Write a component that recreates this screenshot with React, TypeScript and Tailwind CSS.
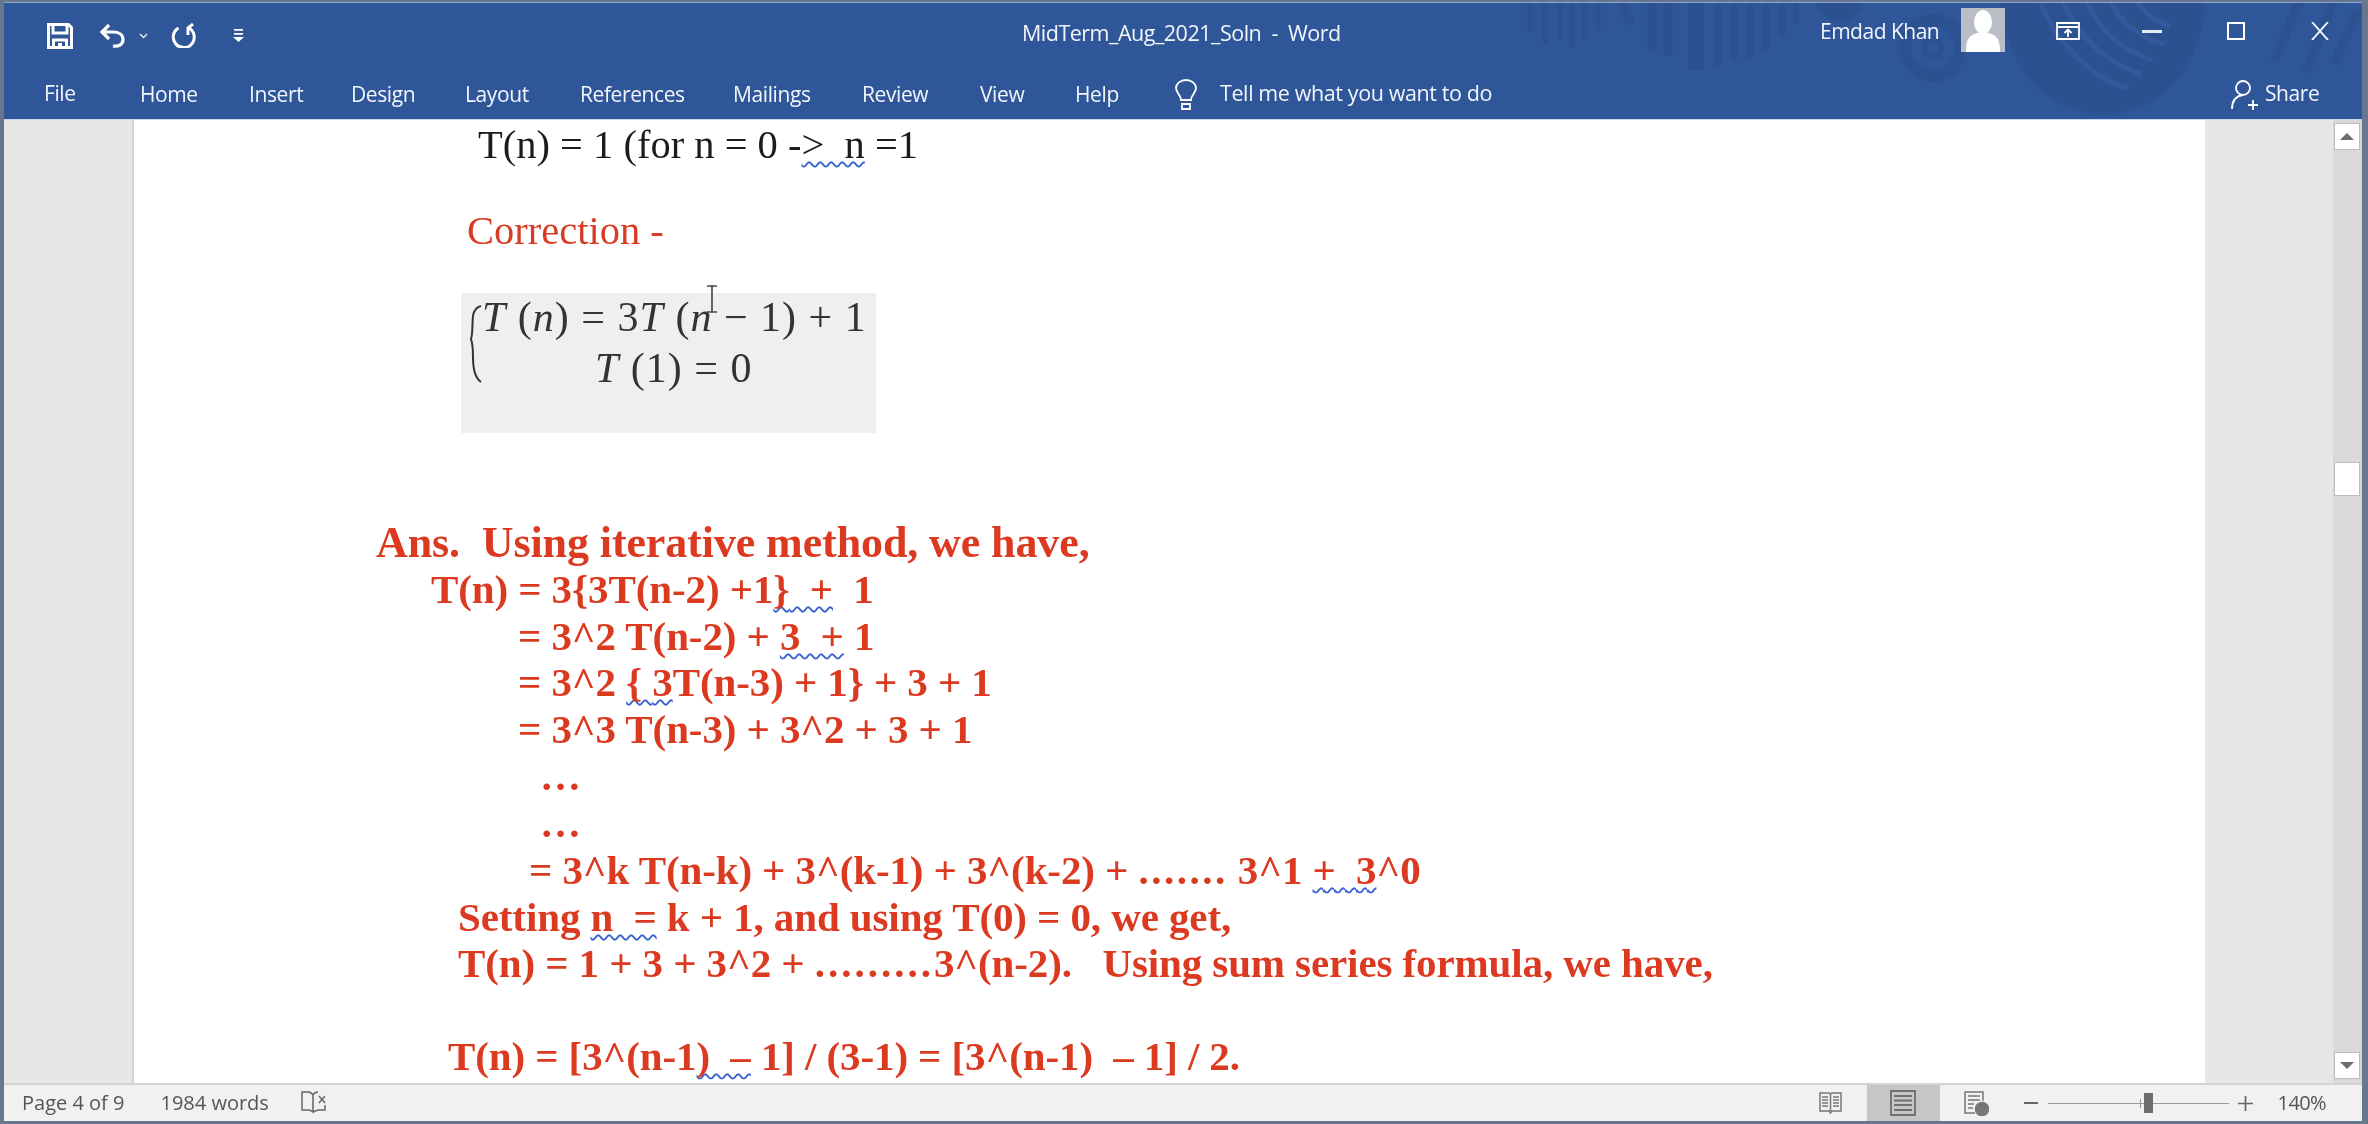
import React from "react";

const Sq = ({ children }: { children: React.ReactNode }) => (
  <span className="underline decoration-wavy decoration-[#3763cf] decoration-[1.5px] underline-offset-[3px] [text-decoration-skip-ink:none]">{children}</span>
);

function Line({ h, ml, cls, children }: { h: string; ml: string; cls: string; children: React.ReactNode }) {
  return <div className={`${h} ${ml} ${cls} flex items-center whitespace-pre leading-none`}>{children}</div>;
}

const bold = "font-bold text-[#dc3a20] text-[41px] tracking-[-0.1px]";

function Watermark() {
  return (
    <svg className="absolute left-0 top-0 pointer-events-none" width="2358" height="117" viewBox="4 3 2358 117" fill="none">
      <g stroke="#2c5190" strokeWidth="5">
        <path d="M1530 0v32M1545 0v44M1560 0v40M1572 0v48M1585 0v40M1598 0v30" />
        <path d="M1622 0l8 24" strokeWidth="9" />
        <path d="M1652 0v52M1668 0v56" strokeWidth="9" />
        <path d="M1696 0v70" strokeWidth="16" />
        <path d="M1718 0v66M1734 0v62M1750 0v58M1766 0v50M1782 0v38M1796 0v24" strokeWidth="6" />
      </g>
      <path d="M1814 0c4 14 16 22 26 22s20-8 24-22z" fill="#2c5190" />
      <circle cx="1933" cy="48" r="28" stroke="#2c5190" strokeWidth="12" />
      <circle cx="1933" cy="48" r="9" stroke="#2c5190" strokeWidth="5" />
      <path d="M2001 0c4 70 46 114 104 114c58 0 98-50 100-114z" fill="#2c5190" />
      <g stroke="#33599c" strokeWidth="5">
        <path d="M2040 0c14 40 50 78 88 88M2062 0c12 30 40 62 80 74M2086 0c10 24 30 48 66 60M2110 0c8 18 24 36 54 44M2136 0c6 10 16 20 34 26" />
      </g>
      <path d="M2300 0l-26 62M2334 0l-28 72M2358 10l-24 54" stroke="#2c5190" strokeWidth="9" />
    </svg>
  );
}

export default function App() {
  return (
    <div className="w-[2368px] h-[1124px] overflow-hidden bg-[#66778f] blur-[0.5px] font-['Open_Sans','Liberation_Sans',sans-serif]">
      <div className="mt-[2px] ml-[4px] w-[2358px] h-[1119px] flex flex-col bg-[#2f5699] border-t border-[#8ea6cc]">
        {/* Title bar */}
        <div className="relative h-[116px] shrink-0 text-white overflow-hidden">
          <Watermark />
          <div className="relative h-[68px] flex items-center">
            <div className="flex items-center -mt-[3px]">
              <svg className="ml-[43px]" width="26" height="26" viewBox="0 0 26 26" fill="none" stroke="white" strokeWidth="3">
                <path d="M1.5 1.5h20l3 3v20h-23z" />
                <path d="M6 2v8h14V2" />
                <path d="M6.500 25v-8h13v8" />
                <path d="M11 20h4v4h-4z" fill="white" stroke="none" />
              </svg>
              <svg className="ml-[26px]" width="27" height="25" viewBox="0 0 27 25" fill="none" stroke="white" strokeWidth="3.2">
                <path d="M10 2L3 9l7 7" />
                <path d="M3 9h11c6 0 10 3 10 7.500S20 24 14 23" />
              </svg>
              <svg className="ml-[13px]" width="9" height="6" viewBox="0 0 9 6" fill="none" stroke="#dfe7f3" strokeWidth="1.5">
                <path d="M1 1l3.500 3.500L8 1" />
              </svg>
              <svg className="ml-[23px]" width="25" height="25" viewBox="0 0 25 25" fill="none" stroke="white" strokeWidth="3">
                <path d="M7.500 5A10.500 10.500 0 1 0 17 4.500" />
                <path d="M22 1l-5 4v7" />
              </svg>
              <svg className="ml-[37px]" width="11" height="13" viewBox="0 0 11 13" fill="white">
                <path d="M1 0h9v1.800H1zM1 4h9v1.800H1zM0 8h11l-5.500 5z" />
              </svg>
            </div>
            <div className="absolute left-[1018px] top-[16px] text-[21.5px] tracking-[-0.5px] text-[#f2f5fa] leading-[28px]">MidTerm_Aug_2021_Soln&nbsp; -&nbsp; Word</div>
            <div className="absolute left-[1816px] top-[14px] text-[21px] tracking-[-0.5px] text-[#f2f5fa] leading-[28px]">Emdad Khan</div>
            <div className="absolute left-[1957px] top-[5px] w-[44px] h-[44px] bg-[#b9bdc6] flex items-end justify-center overflow-hidden">
              <svg width="44" height="44" viewBox="0 0 44 44" fill="white">
                <ellipse cx="22" cy="14" rx="9" ry="12" />
                <path d="M5 44c0-12 2-16 11-19h12c9 3 11 7 11 19z" />
              </svg>
            </div>
            <svg className="absolute left-[2052px] top-[19px]" width="24" height="18" viewBox="0 0 24 18" fill="none" stroke="white" strokeWidth="1.800">
              <path d="M1 1h22v16H1zM1 5h22M12 15V8M8.500 11L12 7.500l3.500 3.500" />
            </svg>
            <div className="absolute left-[2138px] top-[27px] w-[20px] h-[3px] bg-[#e8edf5]" />
            <div className="absolute left-[2223px] top-[19px] w-[18px] h-[18px] border-2 border-white" />
            <svg className="absolute left-[2307px] top-[19px]" width="18" height="18" viewBox="0 0 18 18" fill="none" stroke="white" strokeWidth="1.800">
              <path d="M1 0l16 18M17 0L1 18" />
            </svg>
          </div>
          <div className="relative h-[48px] flex items-center text-[21px] tracking-[-0.4px] text-[#f2f5fa]">
            <span className="ml-[40px] w-[96px] -mt-[3px]">File</span>
            <span className="w-[109px]">Home</span>
            <span className="w-[102px]">Insert</span>
            <span className="w-[114px]">Design</span>
            <span className="w-[115px]">Layout</span>
            <span className="w-[153px]">References</span>
            <span className="w-[129px]">Mailings</span>
            <span className="w-[118px]">Review</span>
            <span className="w-[95px]">View</span>
            <span className="w-[98px]">Help</span>
            <svg width="26" height="32" viewBox="0 0 26 32" fill="none" stroke="white" strokeWidth="1.800">
              <path d="M8 21c0-5-5-7-5-12a10 8 0 0 1 20 0c0 5-5 7-5 12z" />
              <path d="M9 25h8v5H9z" />
            </svg>
            <span className="ml-[21px] text-[21.5px] -mt-[3px]">Tell me what you want to do</span>
            <svg className="absolute left-[2226px] top-[8px]" width="30" height="32" viewBox="0 0 30 32" fill="none" stroke="white" strokeWidth="1.800">
              <circle cx="13" cy="9" r="7" />
              <path d="M2 30c0-9 4-13 11-14M18 26h10M23 21v10" />
            </svg>
            <span className="absolute left-[2261px] top-[7px] text-[21px]">Share</span>
          </div>
        </div>

        {/* Document area */}
        <div className="flex-1 flex min-h-0 border-t border-[#c9d6ec]">
          <div className="w-[130px] shrink-0 bg-[#e6e6e6] border-r-2 border-[#d2d2d2]" />
          <div className="flex-1 bg-white min-w-0 font-['Liberation_Serif',serif] overflow-hidden">
            <Line h="h-[50px]" ml="ml-[344px]" cls="text-[40.5px] text-[#1c1c1c]">
              T(n) = 1 (for n = 0 -<Sq>&gt;  n</Sq> =1
            </Line>
            <Line h="h-[50px]" ml="ml-[333px]" cls="mt-[36px] text-[40.5px] text-[#d93b24]">
              Correction -
            </Line>
            <div className="ml-[327px] mt-[37px] w-[415px] h-[140px] bg-[#efefef] relative text-[#333] leading-none">
              <div className="absolute left-[21px] top-[3px] whitespace-pre text-[42px] tracking-[1px]">
                <i>T</i> (<i>n</i>) = 3<i>T</i> (<i>n</i> − 1) + 1
              </div>
              <div className="absolute left-[134px] top-[54px] whitespace-pre text-[42px] tracking-[1px]">
                <i>T</i> (1) = 0
              </div>
              <svg className="absolute left-[8px] top-[12px]" width="13" height="78" viewBox="0 0 13 78" fill="none" stroke="#333" strokeWidth="2">
                <path d="M12 1C7 2 5 5 4 11C3 19 4 28 2 34c2 6 2 10 2 18c0 12 2 21 8 25" />
              </svg>
              <svg className="absolute left-[245px] -top-[8px]" width="12" height="28" viewBox="0 0 12 28" fill="none" stroke="#444" strokeWidth="1.600">
                <path d="M1 1h10M1 27h10M6 1v26" />
              </svg>
            </div>

            <Line h="h-[46px]" ml="ml-[242px]" cls={`mt-[87px] ${bold} text-[44px]`}>
              Ans.  Using iterative method, we have,
            </Line>
            <Line h="h-[47px]" ml="ml-[297px]" cls={bold}>
              T(n) = 3{"{"}3T(n-2) +1<Sq>{"}"}  +</Sq>  1
            </Line>
            <Line h="h-[46px]" ml="ml-[384px]" cls={bold}>
              = 3^2 T(n-2) + <Sq>3  +</Sq> 1
            </Line>
            <Line h="h-[47px]" ml="ml-[384px]" cls={bold}>
              = 3^2 <Sq>{"{ "}3</Sq>T(n-3) + 1{"}"} + 3 + 1
            </Line>
            <Line h="h-[46px]" ml="ml-[384px]" cls={bold}>
              = 3^3 T(n-3) + 3^2 + 3 + 1
            </Line>
            <Line h="h-[48px]" ml="ml-[406px]" cls={bold}>
              …
            </Line>
            <Line h="h-[46px]" ml="ml-[406px]" cls={bold}>
              …
            </Line>
            <Line h="h-[48px]" ml="ml-[395px]" cls={bold}>
              = 3^k T(n-k) + 3^(k-1) + 3^(k-2) + <span className="tracking-[2.5px]">.......</span> 3^1 <Sq>+  3</Sq>^0
            </Line>
            <Line h="h-[47px]" ml="ml-[324px]" cls={bold}>
              Setting <Sq>n  =</Sq> k + 1, and using T(0) = 0, we get,
            </Line>
            <Line h="h-[44px]" ml="ml-[324px]" cls={bold}>
              T(n) = 1 + 3 + 3^2 + <span className="tracking-[3px]">.........</span>3^(n-2).   Using sum series formula, we have,
            </Line>
            <Line h="h-[46px]" ml="ml-[314px]" cls={`mt-[48px] ${bold}`}>
              T(n) = [3^(n-1<Sq>)  –</Sq> 1] / (3-1) = [3^(n-1)  – 1] / 2.
            </Line>
          </div>
          <div className="w-[128px] shrink-0 bg-[#e6e6e6]" />
          <div className="w-[29px] shrink-0 bg-[#d9d9d9] flex flex-col items-center border-r border-[#c9d8f2]">
            <div className="mt-[3px] w-[26px] h-[27px] bg-white border border-[#bdbdbd] flex items-center justify-center">
              <div className="w-0 h-0 border-x-[7px] border-x-transparent border-b-[7px] border-b-[#6d6d6d]" />
            </div>
            <div className="mt-[312px] w-[26px] h-[34px] bg-white border border-[#bdbdbd]" />
            <div className="mt-auto mb-[4px] w-[26px] h-[27px] bg-white border border-[#bdbdbd] flex items-center justify-center">
              <div className="w-0 h-0 border-x-[7px] border-x-transparent border-t-[7px] border-t-[#6d6d6d]" />
            </div>
          </div>
        </div>

        {/* Status bar */}
        <div className="h-[38px] shrink-0 flex items-center bg-[#f1f1f1] border-t-2 border-[#d3d3d3] text-[#555] text-[20px] relative">
          <span className="ml-[18px]">Page 4 of 9</span>
          <span className="ml-[36px]">1984 words</span>
          <svg className="ml-[32px]" width="26" height="26" viewBox="0 0 26 26" fill="none" stroke="#666" strokeWidth="1.500">
            <path d="M1 2h6c2 0 4 1 5 3v17c-1-1-3-2-5-2H1zM12 5c1-2 3-3 5-3M12 22c2-1 4-2 6-2h6v-5" />
            <path d="M18 6l6 7M24 6l-6 7" />
          </svg>
          <div className="ml-auto flex items-center h-full">
            <svg width="23" height="24" viewBox="0 0 23 24" fill="none" stroke="#777" strokeWidth="1.500">
              <path d="M1 2h9l1.500 1 1.500-1h9v18h-9l-1.500 2-1.500-2H1zM11.500 3v17M3 6h6M3 9h6M3 12h6M3 15h6M14 6h6M14 9h6M14 12h6M14 15h6" />
            </svg>
            <div className="ml-[25px] w-[73px] h-full bg-[#c6c6c6] flex items-center justify-center">
              <svg width="26" height="26" viewBox="0 0 26 26" fill="none" stroke="#6f6f6f" strokeWidth="1.800">
                <path d="M1 1h24v24H1zM4 6h18M4 10.500h18M4 15h18M4 20h18" />
              </svg>
            </div>
            <svg className="ml-[24px]" width="25" height="25" viewBox="0 0 25 25" fill="none" stroke="#777" strokeWidth="1.500">
              <path d="M11 22H1V1h18v9M4 5h12M4 9h12M4 13h6M4 17h5" />
              <circle cx="18" cy="18" r="6.500" fill="#777" />
            </svg>
            <div className="ml-[35px] w-[14px] h-[2px] bg-[#666]" />
            <div className="ml-[10px] w-[181px] h-[1px] bg-[#999] relative">
              <div className="absolute left-[92px] -top-[4px] w-[1px] h-[9px] bg-[#999]" />
              <div className="absolute left-[96px] -top-[10px] w-[9px] h-[20px] bg-[#6c6c6c]" />
            </div>
            <svg className="ml-[9px]" width="15" height="15" viewBox="0 0 15 15" stroke="#666" strokeWidth="1.700">
              <path d="M0 7.500h15M7.500 0v15" />
            </svg>
            <span className="ml-[25px] mr-[36px] tracking-[-0.6px]">140%</span>
          </div>
        </div>
      </div>
    </div>
  );
}
